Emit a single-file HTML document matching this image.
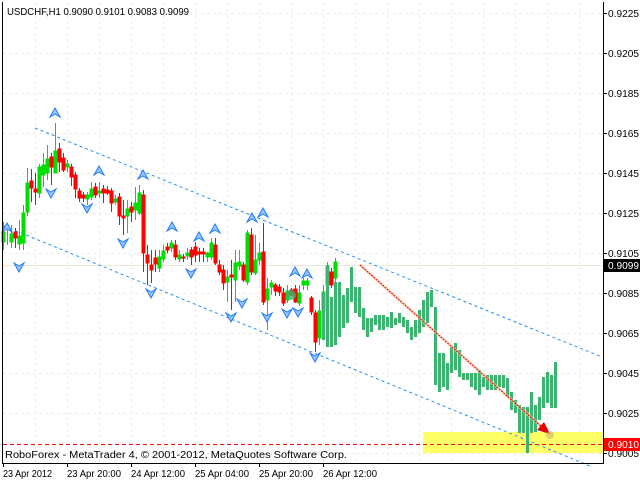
<!DOCTYPE html>
<html><head><meta charset="utf-8"><style>
html,body{margin:0;padding:0;background:#fff;width:640px;height:480px;overflow:hidden}
svg{display:block}
text{font-family:"Liberation Sans",sans-serif;font-size:10px;fill:#000}
</style></head><body>
<svg width="640" height="480" viewBox="0 0 640 480" xmlns="http://www.w3.org/2000/svg">
<rect width="640" height="480" fill="#fff"/>
<g stroke="#f0ecd8" stroke-width="1" stroke-dasharray="3,3" shape-rendering="crispEdges">
<path d="M3 13.5H603M3 53.5H603M3 93.5H603M3 133.5H603M3 173.5H603M3 213.5H603M3 253.5H603M3 293.5H603M3 333.5H603M3 373.5H603M3 413.5H603M3 453.5H603"/>
<path d="M35.5 3V462M67.5 3V462M99.5 3V462M131.5 3V462M163.5 3V462M195.5 3V462M227.5 3V462M259.5 3V462M291.5 3V462M323.5 3V462M355.5 3V462M387.5 3V462M419.5 3V462M451.5 3V462M483.5 3V462M515.5 3V462M547.5 3V462M579.5 3V462"/>
</g>
<line x1="3" y1="265.5" x2="603" y2="265.5" stroke="#ece8d8"/>
<rect x="423" y="432" width="180" height="21" fill="#ffff66"/>
<line x1="3" y1="444.5" x2="603" y2="444.5" stroke="#f00" stroke-dasharray="4,3"/>
<g stroke="#1e90ff" stroke-width="1" stroke-dasharray="3,3" fill="none">
<line x1="35" y1="128" x2="602" y2="357"/>
<line x1="4" y1="226" x2="590" y2="466"/>
</g>
<g shape-rendering="crispEdges">
<g stroke="#00dd00" fill="#00dd00">
<path d="M23.5 205V250M27.5 168V216M39.5 164V198M43.5 153V187M47.5 145V180M55.5 123V173M67.5 160V172M87.5 192V205M91.5 182V200M99.5 182V198M115.5 195V205M127.5 200V233M135.5 187V220M139.5 185V215M159.5 250V272M163.5 245V262M171.5 240V252M179.5 250V262M187.5 248V260M207.5 252V262M211.5 238V260M227.5 270V302M235.5 250V302M239.5 250V270M247.5 230V285M255.5 235V275M259.5 243V265M267.5 278V330M271.5 280V295M287.5 285V303M299.5 285V306M303.5 278V290M307.5 278V290M319.5 300V345M323.5 285V315M327.5 262V290M335.5 258V282"/>
<rect x="22" y="213" width="3" height="30"/><rect x="26" y="183" width="3" height="29"/><rect x="38" y="167" width="3" height="26"/><rect x="42" y="165" width="3" height="10"/><rect x="46" y="159" width="3" height="14"/><rect x="54" y="151" width="3" height="22"/><rect x="66" y="164" width="3" height="3"/><rect x="86" y="195" width="3" height="4"/><rect x="90" y="189" width="3" height="8"/><rect x="98" y="191" width="3" height="2"/><rect x="114" y="199" width="3" height="3"/><rect x="126" y="209" width="3" height="7"/><rect x="134" y="203" width="3" height="7"/><rect x="138" y="193" width="3" height="20"/><rect x="158" y="257" width="3" height="11"/><rect x="162" y="251" width="3" height="8"/><rect x="170" y="243" width="3" height="5"/><rect x="178" y="255" width="3" height="4"/><rect x="186" y="253" width="3" height="3"/><rect x="206" y="253" width="3" height="4"/><rect x="210" y="243" width="3" height="14"/><rect x="226" y="277" width="3" height="5"/><rect x="234" y="263" width="3" height="17"/><rect x="238" y="262" width="3" height="4"/><rect x="246" y="233" width="3" height="49"/><rect x="254" y="260" width="3" height="13"/><rect x="258" y="253" width="3" height="7"/><rect x="266" y="289" width="3" height="11"/><rect x="270" y="283" width="3" height="4"/><rect x="286" y="291" width="3" height="9"/><rect x="298" y="293" width="3" height="10"/><rect x="302" y="281" width="3" height="4"/><rect x="306" y="281" width="3" height="4"/><rect x="318" y="311" width="3" height="27"/><rect x="322" y="292" width="3" height="18"/><rect x="326" y="267" width="3" height="18"/><rect x="334" y="262" width="3" height="16"/>
<path d="M3.5 222V250M7.5 230V245M11.5 225V248M19.5 220V250"/>
<rect x="2" y="232" width="3" height="10"/><rect x="10" y="234" width="3" height="8"/><rect x="18" y="236" width="3" height="8"/>
</g>
<g stroke="#f00" fill="#f00">
<path d="M15.5 228V248M31.5 169V202M35.5 173V205M51.5 153V185M59.5 143V172M63.5 153V172M71.5 164V186M75.5 172V198M79.5 188V202M83.5 192V202M95.5 183V198M103.5 185V203M107.5 186V195M111.5 188V212M119.5 193V225M123.5 200V235M131.5 202V222M143.5 190V272M147.5 245V285M151.5 250V283M155.5 250V272M167.5 243V253M175.5 240V260M183.5 254V262M191.5 247V265M195.5 242V262M199.5 248V262M203.5 248V262M215.5 238V265M219.5 260V275M223.5 265V290M231.5 260V310M243.5 262V282M251.5 228V275M263.5 223V305M275.5 283V296M279.5 284V296M283.5 288V306M291.5 288V296M295.5 285V303M311.5 296V315M315.5 310V352M331.5 268V288"/>
<rect x="14" y="232" width="3" height="6"/><rect x="30" y="181" width="3" height="7"/><rect x="34" y="189" width="3" height="3"/><rect x="50" y="157" width="3" height="10"/><rect x="58" y="149" width="3" height="13"/><rect x="62" y="158" width="3" height="12"/><rect x="70" y="167" width="3" height="10"/><rect x="74" y="175" width="3" height="14"/><rect x="78" y="191" width="3" height="7"/><rect x="82" y="195" width="3" height="3"/><rect x="94" y="187" width="3" height="8"/><rect x="102" y="189" width="3" height="4"/><rect x="106" y="190" width="3" height="3"/><rect x="110" y="191" width="3" height="12"/><rect x="118" y="197" width="3" height="19"/><rect x="122" y="216" width="3" height="2"/><rect x="130" y="207" width="3" height="5"/><rect x="142" y="195" width="3" height="58"/><rect x="146" y="255" width="3" height="8"/><rect x="150" y="265" width="3" height="5"/><rect x="154" y="258" width="3" height="6"/><rect x="166" y="247" width="3" height="3"/><rect x="174" y="245" width="3" height="12"/><rect x="182" y="257" width="3" height="1"/><rect x="190" y="250" width="3" height="7"/><rect x="194" y="247" width="3" height="8"/><rect x="198" y="252" width="3" height="2"/><rect x="202" y="252" width="3" height="2"/><rect x="214" y="245" width="3" height="18"/><rect x="218" y="265" width="3" height="7"/><rect x="222" y="270" width="3" height="13"/><rect x="230" y="275" width="3" height="2"/><rect x="242" y="265" width="3" height="15"/><rect x="250" y="235" width="3" height="37"/><rect x="262" y="252" width="3" height="50"/><rect x="274" y="285" width="3" height="6"/><rect x="278" y="287" width="3" height="5"/><rect x="282" y="293" width="3" height="10"/><rect x="290" y="290" width="3" height="5"/><rect x="294" y="289" width="3" height="13"/><rect x="310" y="298" width="3" height="14"/><rect x="314" y="313" width="3" height="29"/><rect x="330" y="272" width="3" height="13"/>
</g>
</g>
<circle cx="291" cy="295" r="5" fill="#3cb371" opacity="0.8"/>
<g fill="#3cb371" shape-rendering="crispEdges">
<rect x="322" y="292" width="3" height="48"/><rect x="326" y="265" width="3" height="82"/><rect x="330" y="297" width="3" height="50"/><rect x="334" y="282" width="3" height="63"/><rect x="338" y="282" width="3" height="55"/><rect x="342" y="295" width="3" height="33"/><rect x="346" y="288" width="3" height="35"/><rect x="350" y="267" width="3" height="35"/><rect x="354" y="287" width="3" height="26"/><rect x="358" y="287" width="3" height="30"/><rect x="362" y="308" width="3" height="22"/><rect x="366" y="318" width="3" height="19"/><rect x="370" y="318" width="3" height="14"/><rect x="374" y="315" width="3" height="10"/><rect x="378" y="315" width="3" height="15"/><rect x="382" y="315" width="3" height="15"/><rect x="386" y="317" width="3" height="10"/><rect x="390" y="312" width="3" height="16"/><rect x="394" y="318" width="3" height="7"/><rect x="398" y="313" width="3" height="10"/><rect x="402" y="317" width="3" height="10"/><rect x="406" y="320" width="3" height="13"/><rect x="410" y="327" width="3" height="13"/><rect x="414" y="320" width="3" height="17"/><rect x="418" y="310" width="3" height="23"/><rect x="422" y="300" width="3" height="27"/><rect x="426" y="292" width="3" height="31"/><rect x="430" y="290" width="3" height="17"/><rect x="434" y="307" width="3" height="78"/><rect x="438" y="353" width="3" height="39"/><rect x="442" y="353" width="3" height="34"/><rect x="446" y="363" width="3" height="27"/><rect x="450" y="347" width="3" height="26"/><rect x="454" y="343" width="3" height="27"/><rect x="458" y="350" width="3" height="27"/><rect x="462" y="373" width="3" height="7"/><rect x="466" y="373" width="3" height="7"/><rect x="470" y="373" width="3" height="14"/><rect x="474" y="373" width="3" height="17"/><rect x="478" y="370" width="3" height="25"/><rect x="482" y="377" width="3" height="10"/><rect x="486" y="375" width="3" height="15"/><rect x="490" y="375" width="3" height="15"/><rect x="494" y="375" width="3" height="15"/><rect x="498" y="375" width="3" height="12"/><rect x="502" y="375" width="3" height="13"/><rect x="506" y="378" width="3" height="19"/><rect x="510" y="392" width="3" height="18"/><rect x="514" y="400" width="3" height="13"/><rect x="518" y="405" width="3" height="28"/><rect x="522" y="407" width="3" height="26"/><rect x="526" y="407" width="3" height="46"/><rect x="530" y="392" width="3" height="41"/><rect x="534" y="405" width="3" height="27"/><rect x="538" y="397" width="3" height="23"/><rect x="542" y="377" width="3" height="31"/><rect x="546" y="372" width="3" height="31"/><rect x="550" y="375" width="3" height="33"/><rect x="554" y="362" width="3" height="46"/>
</g>
<line x1="360" y1="265" x2="543" y2="428" stroke="#f4c8a0" stroke-width="3" opacity="0.6"/>
<line x1="360" y1="265" x2="543" y2="428" stroke="#e00" stroke-width="1" stroke-dasharray="2,1"/>
<path d="M550 434L537 430L544 422Z" fill="#e00"/>
<circle cx="550" cy="435" r="4" fill="#c8b070" opacity="0.6"/>
<defs>
<path id="fu" d="M-5 4L0 -5L5 4L0 1Z" fill="#9cc8ff" stroke="#1e78ff" stroke-width="1"/>
<path id="fd" d="M-5 -4L0 5L5 -4L0 -1Z" fill="#9cc8ff" stroke="#1e78ff" stroke-width="1"/>
</defs>
<g>
<use href="#fu" x="55" y="113"/><use href="#fu" x="7" y="228"/><use href="#fu" x="99" y="171"/><use href="#fu" x="143" y="175"/><use href="#fu" x="172" y="227"/><use href="#fu" x="199" y="237"/><use href="#fu" x="215" y="229"/><use href="#fu" x="252" y="218"/><use href="#fu" x="263" y="213"/><use href="#fu" x="295" y="272"/><use href="#fu" x="307" y="274"/>
<use href="#fd" x="51" y="193"/><use href="#fd" x="87" y="208"/><use href="#fd" x="123" y="243"/><use href="#fd" x="19" y="267"/><use href="#fd" x="191" y="273"/><use href="#fd" x="151" y="293"/><use href="#fd" x="242" y="303"/><use href="#fd" x="231" y="317"/><use href="#fd" x="267" y="317"/><use href="#fd" x="287" y="313"/><use href="#fd" x="298" y="312"/><use href="#fd" x="315" y="357"/>
</g>
<g stroke="#000" shape-rendering="crispEdges">
<line x1="2.5" y1="2" x2="2.5" y2="463"/>
<line x1="2" y1="463.5" x2="604" y2="463.5"/>
<line x1="603.5" y1="2" x2="603.5" y2="464"/>
<path d="M3.5 463V467M67.5 463V467M131.5 463V467M195.5 463V467M259.5 463V467M323.5 463V467"/>
<path d="M603 13.5H607M603 53.5H607M603 93.5H607M603 133.5H607M603 173.5H607M603 213.5H607M603 253.5H607M603 293.5H607M603 333.5H607M603 373.5H607M603 413.5H607M603 453.5H607"/>
</g>
<text x="7" y="15" textLength="182" lengthAdjust="spacingAndGlyphs">USDCHF,H1  0.9090 0.9101 0.9083 0.9099</text>
<text x="5" y="458" textLength="342" lengthAdjust="spacingAndGlyphs">RoboForex - MetaTrader 4, © 2001-2012, MetaQuotes Software Corp.</text>
<g>
<text x="3" y="477" textLength="49" lengthAdjust="spacingAndGlyphs">23 Apr 2012</text><text x="67" y="477" textLength="54" lengthAdjust="spacingAndGlyphs">23 Apr 20:00</text><text x="131" y="477" textLength="54" lengthAdjust="spacingAndGlyphs">24 Apr 12:00</text><text x="195" y="477" textLength="54" lengthAdjust="spacingAndGlyphs">25 Apr 04:00</text><text x="259" y="477" textLength="54" lengthAdjust="spacingAndGlyphs">25 Apr 20:00</text><text x="323" y="477" textLength="54" lengthAdjust="spacingAndGlyphs">26 Apr 12:00</text>
</g>
<g>
<text x="608" y="17" textLength="31" lengthAdjust="spacingAndGlyphs">0.9225</text><text x="608" y="57" textLength="31" lengthAdjust="spacingAndGlyphs">0.9205</text><text x="608" y="97" textLength="31" lengthAdjust="spacingAndGlyphs">0.9185</text><text x="608" y="137" textLength="31" lengthAdjust="spacingAndGlyphs">0.9165</text><text x="608" y="177" textLength="31" lengthAdjust="spacingAndGlyphs">0.9145</text><text x="608" y="217" textLength="31" lengthAdjust="spacingAndGlyphs">0.9125</text><text x="608" y="257" textLength="31" lengthAdjust="spacingAndGlyphs">0.9105</text><text x="608" y="297" textLength="31" lengthAdjust="spacingAndGlyphs">0.9085</text><text x="608" y="337" textLength="31" lengthAdjust="spacingAndGlyphs">0.9065</text><text x="608" y="377" textLength="31" lengthAdjust="spacingAndGlyphs">0.9045</text><text x="608" y="417" textLength="31" lengthAdjust="spacingAndGlyphs">0.9025</text><text x="608" y="457" textLength="31" lengthAdjust="spacingAndGlyphs">0.9005</text>
</g>
<rect x="604" y="259" width="36" height="13" fill="#000"/>
<text x="608" y="269" textLength="31" lengthAdjust="spacingAndGlyphs" style="fill:#fff">0.9099</text>
<rect x="604" y="438" width="36" height="13" fill="#f00"/>
<text x="608" y="448" textLength="31" lengthAdjust="spacingAndGlyphs" style="fill:#fff">0.9010</text>
</svg>
</body></html>
